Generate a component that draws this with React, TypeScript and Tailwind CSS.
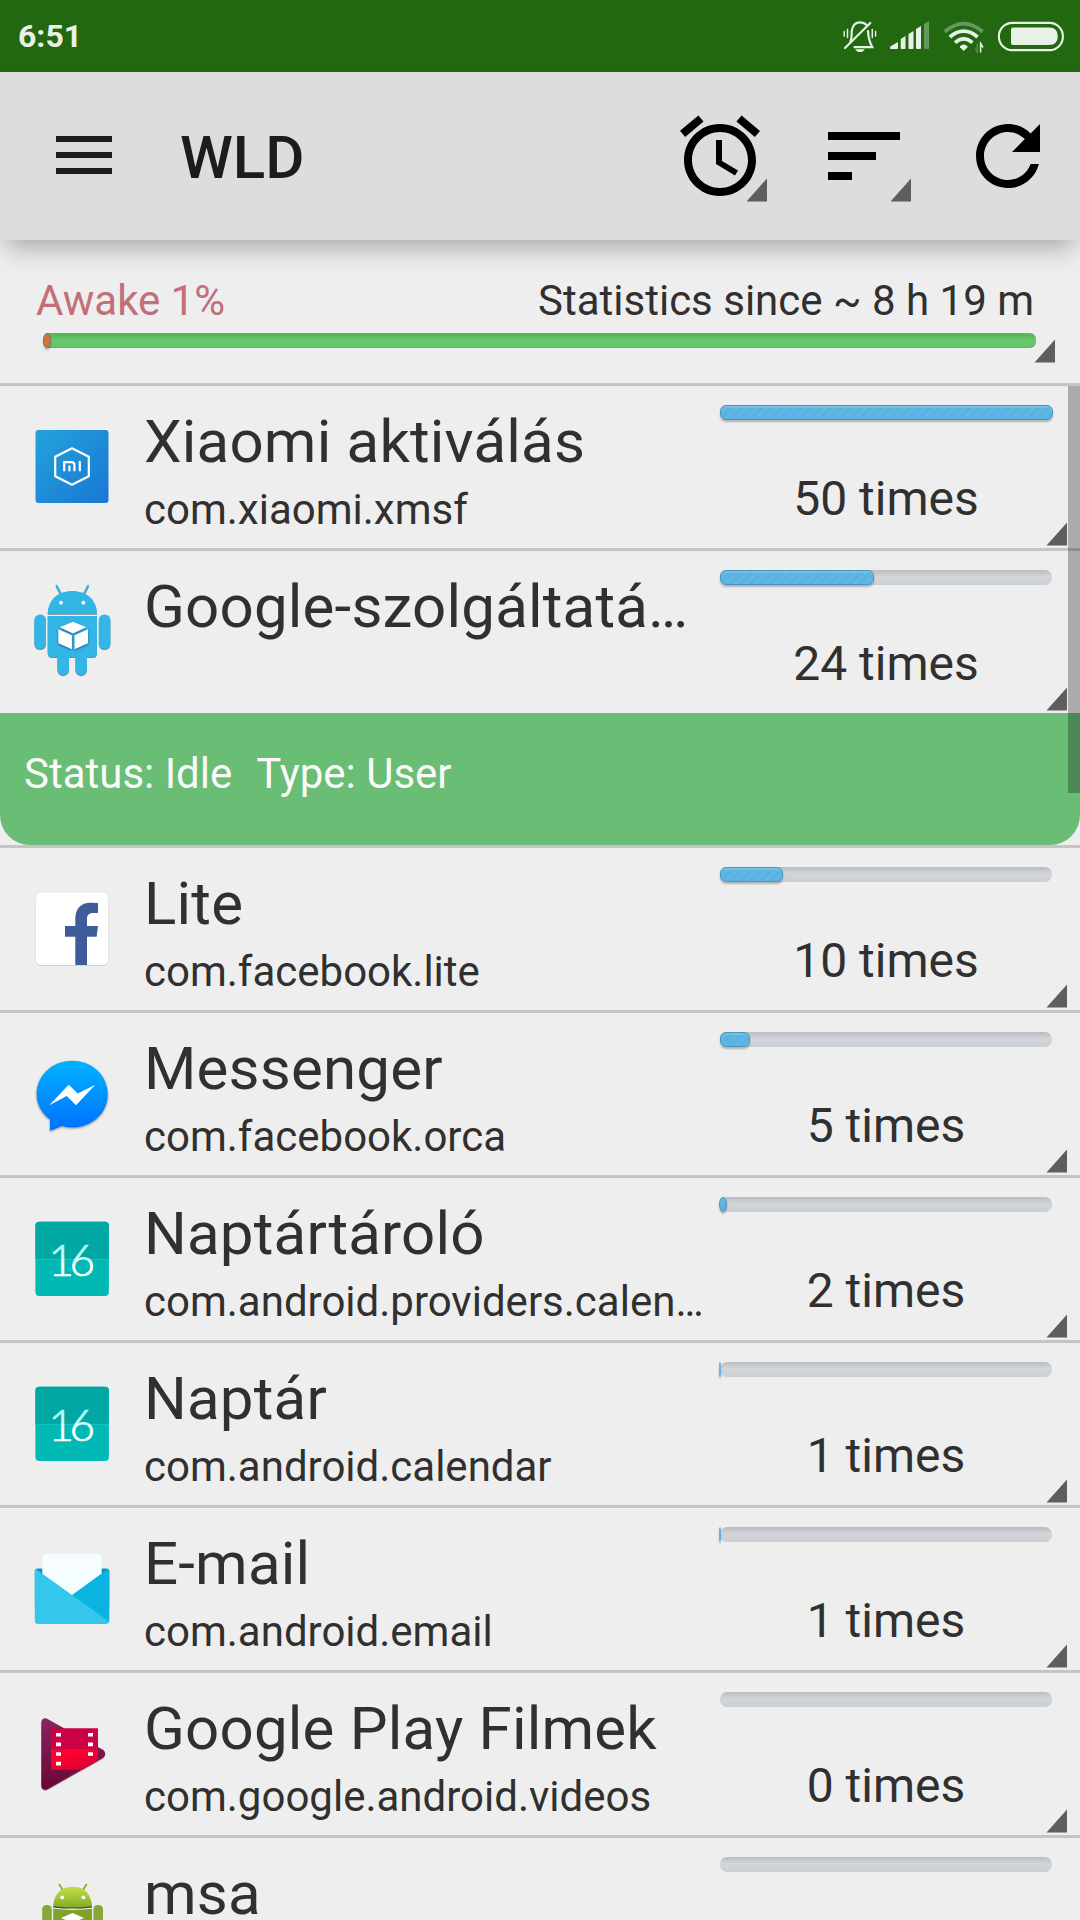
import { type ReactNode } from "react";

type AppItem = {
  name: string;
  pkg?: string;
  times: number;
  fill: number;
  icon: ReactNode;
  details?: string[];
};

function IconBox({ children }: { children: ReactNode }) {
  return (
    <svg viewBox="0 0 96 96" className="mt-[33px] h-24 w-24 shrink-0">
      {children}
    </svg>
  );
}

function XiaomiIcon() {
  return (
    <IconBox>
      <defs>
        <linearGradient id="mi" x1="0" y1="0" x2="1" y2="1">
          <stop offset="0" stopColor="#22a3dc" />
          <stop offset="1" stopColor="#1a76d3" />
        </linearGradient>
      </defs>
      <rect x="11.5" y="11" width="73" height="73" rx="3" fill="url(#mi)" />
      <path
        d="M48 29.3L64.8 37.8V57.2L48 65.8L31.2 57.2V37.8Z"
        fill="none"
        stroke="#fff"
        strokeWidth="2.2"
        strokeLinejoin="round"
      />
      <path
        d="M40.2 52.3V43.2H47.5Q50.4 43.2 50.4 46V52.3M45.4 46.5V52.3M55.8 42V52.3"
        fill="none"
        stroke="#fff"
        strokeWidth="2.2"
      />
    </IconBox>
  );
}

function BlueAndroidIcon() {
  return (
    <IconBox>
      <g
        fill="#33b5e5"
        className="[filter:drop-shadow(0.7px_1px_0.5px_rgba(0,40,60,0.5))]"
      >
        <path
          d="M32.7 1.7L37 10M64 1.7L59.8 10"
          stroke="#33b5e5"
          strokeWidth="2"
          strokeLinecap="round"
        />
        <path d="M23.7 29.8C24 15.5 34 7 48.3 7S72.7 15.5 73 29.8Z" />
        <path d="M23.7 32H73V68.5Q73 73 68.5 73H63V85.5A5.8 5.8 0 0 1 51.4 85.5V73H45V85.5A5.8 5.8 0 0 1 33.4 85.5V73H28.2Q23.7 73 23.7 68.5Z" />
        <rect x="10.4" y="30.5" width="11.6" height="34.5" rx="5.5" />
        <rect x="74.8" y="30.5" width="11.6" height="34.5" rx="5.5" />
      </g>
      <g fill="#fff">
        <circle cx="37" cy="18.7" r="1.9" />
        <circle cx="59.3" cy="18.7" r="1.9" />
        <g className="[filter:drop-shadow(0_1.5px_0.8px_rgba(0,50,80,0.6))]">
          <path d="M49 37.7L62.3 43.3L49 49.4L35.7 43.3Z" />
          <path d="M34.3 45.3L47.9 51.3V65.3L34.3 59.3Z" />
          <path d="M50.5 51.3L64 45.3V59.3L50.5 65.3Z" />
        </g>
      </g>
    </IconBox>
  );
}

function FacebookLiteIcon() {
  return (
    <IconBox>
      <rect x="11.7" y="12.5" width="72.6" height="72.5" rx="5" fill="#d2d2d2" />
      <rect x="12" y="11.8" width="72" height="72.3" rx="5" fill="#fff" />
      <path
        d="M51.3 84V55.7H41V45H51.3V38.2C51.3 27.5 57 21.7 66.5 21.7C70 21.7 73 22 74 22.1V32H69.5C64.5 32 63 34.3 63 38.2V45H74L72.6 55.7H63V84Z"
        fill="#3f5c9a"
      />
    </IconBox>
  );
}

function MessengerIcon() {
  return (
    <IconBox>
      <defs>
        <linearGradient id="msg" x1="0" y1="0" x2="0" y2="1">
          <stop offset="0" stopColor="#00b2ff" />
          <stop offset="1" stopColor="#0070ff" />
        </linearGradient>
      </defs>
      <path
        d="M48.2 14.7C28.4 14.7 12.7 29.3 12.7 48.2C12.7 58.4 17.8 67.4 26 73.3V84.7L38.1 79.8C41.3 80.8 44.7 81.3 48.2 81.3C68 81.3 83.7 66.8 83.7 48.2C83.7 29.3 68 14.7 48.2 14.7Z"
        fill="url(#msg)"
        className="[filter:drop-shadow(0_1px_0.8px_rgba(0,0,0,0.45))]"
      />
      <path
        d="M25.3 59.3L44.7 38.7L53.7 47.4L71.3 38.7L52 59.3L42.7 50Z"
        fill="#fff"
      />
    </IconBox>
  );
}

function CalendarIcon() {
  return (
    <IconBox>
      <rect x="11.4" y="10.8" width="73.5" height="74.3" rx="4" fill="#00b9b5" />
      <path d="M11.4 48V14.8Q11.4 10.8 15.4 10.8H80.9Q84.9 10.8 84.9 14.8V48Z" fill="#00a7a3" />
      <path d="M11.4 48.3H84.9" stroke="#1ac6c2" strokeWidth="0.9" />
      <defs>
        <linearGradient id="day" x1="0" y1="0" x2="0" y2="1">
          <stop offset="0.3" stopColor="#a8fffb" />
          <stop offset="0.65" stopColor="#fff" />
        </linearGradient>
      </defs>
      <text
        x="45.5"
        y="64.7"
        textAnchor="middle"
        fill="url(#day)"
        stroke="url(#day)"
        strokeWidth="0.7"
        className="font-['Lato','Liberation_Sans',sans-serif] text-[44px] font-light tracking-[-4.5px]"
      >
        16
      </text>
    </IconBox>
  );
}

function EmailIcon() {
  return (
    <IconBox>
      <rect x="10.8" y="27.4" width="74.5" height="40" rx="3" fill="#0796bd" />
      <path d="M18.3 60V17Q18.3 12.8 22.5 12.8H73.5Q77.7 12.8 77.7 17V60Z" fill="#f5fdff" />
      <path d="M48 54L83.5 28.2Q85.3 27.8 85.3 30V81L72 76L40 56Z" fill="#0bb3e0" />
      <path
        d="M12.4 28.4L85 80.6Q84.8 83 82 83H14Q10.8 83 10.8 80V29.5Q10.8 27.5 12.4 28.4Z"
        fill="#35c6ec"
      />
    </IconBox>
  );
}

function MoviesIcon() {
  return (
    <IconBox>
      <defs>
        <linearGradient id="mov" x1="0" y1="0" x2="0" y2="1">
          <stop offset="0" stopColor="#8a2360" />
          <stop offset="1" stopColor="#6a0636" />
        </linearGradient>
        <linearGradient id="film" x1="0" y1="0" x2="1" y2="1">
          <stop offset="0.3" stopColor="#ff0030" />
          <stop offset="1" stopColor="#d00035" />
        </linearGradient>
      </defs>
      <path
        d="M17.3 16.5C17.3 13 20.5 11.2 23.5 12.9L78.8 43.7C82 45.7 82 50 78.8 52L23.5 83.2C20.5 84.8 17.3 83 17.3 79.8Z"
        fill="url(#mov)"
        className="[filter:drop-shadow(0_1px_0.5px_rgba(0,0,0,0.3))]"
      />
      <path d="M27 22.2H74V43H27Z" fill="#cc0045" />
      <path d="M27 43H74V54.8L58 63.8H27Z" fill="url(#film)" />
      <path
        d="M32 27h5v3.6h-5zM32 36.6h5v3.6h-5zM32 46.2h5v3.6h-5zM32 55.8h5v3.6h-5zM64 27h5v3.6h-5zM64 36.6h5v3.6h-5zM64 46.2h5v3.6h-5z"
        fill="#fff"
      />
    </IconBox>
  );
}

function GreenAndroidIcon() {
  return (
    <IconBox>
      <defs>
        <linearGradient id="droid" x1="0" y1="0" x2="0" y2="1">
          <stop offset="0" stopColor="#c3e046" />
          <stop offset="1" stopColor="#83a92a" />
        </linearGradient>
      </defs>
      <path
        d="M35.5 13.8L39 19.5M62.3 13.8L58.6 19.5"
        stroke="#8fae3c"
        strokeWidth="2"
        strokeLinecap="round"
      />
      <path d="M29.2 36C29.5 23 37 15.7 48.7 15.7S67.7 23 68 36Q48.7 38.5 29.2 36Z" fill="url(#droid)" />
      <path d="M29.2 35.8Q48.7 38.2 68 35.8" stroke="#3d5210" strokeWidth="1.2" fill="none" />
      <path d="M29.2 37.8Q48.7 40 68 37.8V80H29.2Z" fill="#7fa22c" />
      <rect x="18.2" y="34" width="9.6" height="34" rx="4.5" fill="#86a83a" />
      <rect x="69.4" y="34" width="9.6" height="34" rx="4.5" fill="#86a83a" />
      <circle cx="38.3" cy="26.3" r="1.9" fill="#fff" />
      <circle cx="59.4" cy="26.3" r="1.9" fill="#fff" />
      <path d="M48.5 42L60 47L48.5 52L37 47Z" fill="#fff" />
      <path d="M36.5 48.5L48 53.5V62H36.5ZM60.5 48.5L49 53.5V62H60.5Z" fill="#e6e6e6" />
    </IconBox>
  );
}

const apps: AppItem[] = [
  { name: "Xiaomi aktiválás", pkg: "com.xiaomi.xmsf", times: 50, fill: 333, icon: <XiaomiIcon /> },
  {
    name: "Google-szolgáltatások",
    times: 24,
    fill: 154,
    icon: <BlueAndroidIcon />,
    details: ["Status: Idle", "Type: User"],
  },
  { name: "Lite", pkg: "com.facebook.lite", times: 10, fill: 63, icon: <FacebookLiteIcon /> },
  { name: "Messenger", pkg: "com.facebook.orca", times: 5, fill: 30, icon: <MessengerIcon /> },
  {
    name: "Naptártároló",
    pkg: "com.android.providers.calendar",
    times: 2,
    fill: 8,
    icon: <CalendarIcon />,
  },
  { name: "Naptár", pkg: "com.android.calendar", times: 1, fill: 2, icon: <CalendarIcon /> },
  { name: "E-mail", pkg: "com.android.email", times: 1, fill: 2, icon: <EmailIcon /> },
  {
    name: "Google Play Filmek",
    pkg: "com.google.android.videos",
    times: 0,
    fill: 0,
    icon: <MoviesIcon />,
  },
  { name: "msa", times: 0, fill: 0, icon: <GreenAndroidIcon /> },
];

function Corner({ className }: { className: string }) {
  return (
    <svg viewBox="0 0 22 24" className={`absolute h-6 w-[22px] ${className}`}>
      <path d="M21 0.5V23.5H0.5Z" fill="#5e5e5e" />
    </svg>
  );
}

function StatusBar() {
  return (
    <div className="flex h-[72px] shrink-0 items-center justify-between bg-[#216811] pl-[18px] pr-4 text-[#e9f0e7]">
      <span className="text-[32px] leading-[38px] font-bold">6:51</span>
      <svg viewBox="840 18 224 36" className="h-9 w-56" fill="none">
        {/* Silent bell */}
        <g stroke="currentColor" strokeWidth="2.2" strokeLinecap="round">
          <path d="M850.5 41.5C852.3 37 851.3 34 851.8 30.5C852.8 25 856 22.3 860 22.3C862.7 22.3 864.8 23.2 866.2 24.8" />
          <path d="M868 31C868.3 36 868.5 40.5 872.3 47.2H854.5" />
          <path d="M845 48L870.3 23" />
          <path d="M847.5 29.5V37.5M844.2 31.5V36M872.3 29.5V37.5M875.6 31.5V36" strokeWidth="1.5" />
        </g>
        <path d="M855.3 49.2H864.7Q863.5 52 860 52T855.3 49.2Z" fill="currentColor" />
        {/* Signal */}
        <g fill="currentColor">
          <path d="M890 47.5Q890 46.5 891 46L898 42V48Q898 49 897 49H891Q890 49 890 47.5Z" />
          <path d="M900.7 39L905.5 36V48Q905.5 49 904.5 49H901.7Q900.7 49 900.7 48Z" />
          <path d="M908.5 34L913.5 31V48Q913.5 49 912.5 49H909.5Q908.5 49 908.5 48Z" />
          <path d="M916 29L921 26V48Q921 49 920 49H917Q916 49 916 48Z" />
          <path d="M924 24L929 21V48Q929 49 928 49H925Q924 49 924 48Z" opacity="0.35" />
        </g>
        {/* Wifi */}
        <g stroke="currentColor" strokeWidth="3.8">
          <path d="M944.8 31.8Q963.7 15.5 982.6 31.8" opacity="0.35" />
          <path d="M949.8 37Q963.7 25.3 977.6 37" />
          <path d="M955 42.6Q963.7 35.2 972.4 42.6" />
        </g>
        <path d="M960 46.2Q963.7 43 967.4 46.2V47.3L963.7 51L960 47.3Z" fill="currentColor" />
        <path d="M980.6 52.5V43.5L983 47.5" stroke="currentColor" strokeWidth="1.5" />
        <path d="M977.3 43.5V52L975 48.5" stroke="currentColor" strokeWidth="1.3" opacity="0.3" />
        {/* Battery */}
        <rect x="998.9" y="22.9" width="64" height="27.2" rx="13.4" stroke="currentColor" strokeWidth="2.1" />
        <path d="M1013 27.6H1049Q1057.8 27.6 1057.8 36.3T1049 45H1013Q1011 45 1011 43V29.6Q1011 27.6 1013 27.6Z" fill="currentColor" />
      </svg>
    </div>
  );
}

function Toolbar() {
  return (
    <header className="relative z-10 flex h-[168px] shrink-0 items-start bg-[#ddd] pl-14 shadow-[0_14px_24px_-6px_rgba(0,0,0,0.29)]">
      <button className="mt-16 flex w-14 flex-col gap-2.5">
        <span className="h-1.5 bg-[#1c1c1c]" />
        <span className="h-1.5 bg-[#1c1c1c]" />
        <span className="h-1.5 bg-[#1c1c1c]" />
      </button>
      <h1 className="mt-[51px] ml-17 grow text-[60px] leading-[70px] font-medium text-[#1c1c1c]">
        WLD
      </h1>
      <button className="relative mt-9 mr-12 h-24 w-24">
        <svg viewBox="0 0 24 24" className="h-24 w-24">
          <path d="M22 5.72l-4.6-3.86-1.29 1.53 4.6 3.86L22 5.72zM7.88 3.39L6.6 1.86 2 5.71l1.29 1.53 4.59-3.85zM12.5 8H11v6l4.75 2.85.75-1.23-4-2.37V8zM12 4c-4.97 0-9 4.03-9 9s4.02 9 9 9c4.97 0 9-4.03 9-9s-4.03-9-9-9zm0 16c-3.87 0-7-3.13-7-7s3.13-7 7-7 7 3.13 7 7-3.13 7-7 7z" />
        </svg>
        <Corner className="top-[70px] left-[74px]" />
      </button>
      <button className="relative mt-9 mr-12 h-24 w-24">
        <svg viewBox="0 0 24 24" className="h-24 w-24">
          <path d="M3 18h6v-2H3v2zM3 6v2h18V6H3zm0 7h12v-2H3v2z" />
        </svg>
        <Corner className="top-[70px] left-[74px]" />
      </button>
      <button className="mt-9 mr-6 h-24 w-24">
        <svg viewBox="0 0 24 24" className="h-24 w-24">
          <path d="M17.65 6.35C16.2 4.9 14.21 4 12 4c-4.42 0-7.99 3.58-7.99 8s3.57 8 7.99 8c3.73 0 6.84-2.55 7.73-6h-2.08c-.82 2.33-3.04 4-5.65 4-3.31 0-6-2.69-6-6s2.69-6 6-6c1.66 0 3.14.69 4.22 1.78L13 11h7V4l-2.35 2.35z" />
        </svg>
      </button>
    </header>
  );
}

function Summary() {
  return (
    <section className="relative h-[146px] shrink-0 border-b-[3px] border-[#c4c4c4] pt-9 pr-11 pl-9">
      <div className="flex justify-between text-[42px] leading-[49px]">
        <span className="text-[#c26f7a]">Awake 1%</span>
        <span className="mr-0.5">Statistics since ~ 8 h 19 m</span>
      </div>
      <div className="mt-2 ml-[7px] h-[15px] rounded-md border-b border-[#5aba5e] bg-linear-to-b from-[#55b958] from-20% to-[#68c46d] to-45%">
        <div className="h-[15px] w-2 rounded-[50%] border border-[#8e7a50] bg-[#d96f3e] shadow-[0_2px_2px_rgba(0,0,0,0.25)]" />
      </div>
      <Corner className="top-[99px] left-[1034px]" />
    </section>
  );
}

function UsageBar({ fill }: { fill: number }) {
  return (
    <div className="h-[15px] w-[332px] rounded-[7px] bg-linear-to-b from-[#b9bcc0] via-[#d2d6da] via-45% to-[#c9cfd3]">
      {fill > 0 && (
        <div
          className={`h-[15px] border-[#4795bd] bg-[repeating-linear-gradient(135deg,#58b2e2_0px,#58b2e2_3px,#62b6e2_5px,#62b6e2_7px)] shadow-[inset_0_2px_1px_rgba(140,205,225,0.5),0_2px_2px_rgba(0,0,0,0.25)] ${
            fill < 10 ? "-ml-px rounded-[50%]" : "rounded-[6px]"
          } ${fill < 4 ? "border-y" : "border"}`}
          style={{ width: fill }}
        />
      )}
    </div>
  );
}

function AppRow({ app }: { app: AppItem }) {
  return (
    <li className="shrink-0 border-b-[3px] border-[#c4c4c4]">
      <div className="relative flex h-[162px] items-start pl-6">
        {app.icon}
        <div className="ml-6 w-[564px] pt-[21px]">
          <h2 className="truncate text-[60px] leading-[70px] tracking-[0.2px]">{app.name}</h2>
          <p className="mt-2 truncate text-[42px] leading-[49px]">{app.pkg}</p>
        </div>
        <div className="ml-3 w-[332px] pt-[19px]">
          <UsageBar fill={app.fill} />
          <p className="mt-[51px] text-center text-[48px] leading-14">{app.times} times</p>
        </div>
        <Corner className="top-[136px] left-[1046px]" />
      </div>
      {app.details && (
        <div className="flex h-[132px] items-center gap-6 rounded-b-[30px] bg-[#69bd75] pb-3 pl-6 text-[42px] leading-[49px] text-[#fafafa]">
          {app.details.map((detail) => (
            <span key={detail}>{detail}</span>
          ))}
        </div>
      )}
    </li>
  );
}

export default function App() {
  return (
    <div className="flex h-[1920px] w-[1080px] flex-col overflow-hidden bg-[#eee] font-['Roboto','Liberation_Sans',sans-serif] text-[#303030]">
      <StatusBar />
      <Toolbar />
      <Summary />
      <main className="relative min-h-0 grow overflow-hidden">
        <ul className="flex flex-col">
          {apps.map((app) => (
            <AppRow key={app.name} app={app} />
          ))}
        </ul>
        {/* Scroll thumb */}
        <div className="absolute top-0 right-0 h-[407px] w-3 bg-black/28" />
      </main>
    </div>
  );
}
